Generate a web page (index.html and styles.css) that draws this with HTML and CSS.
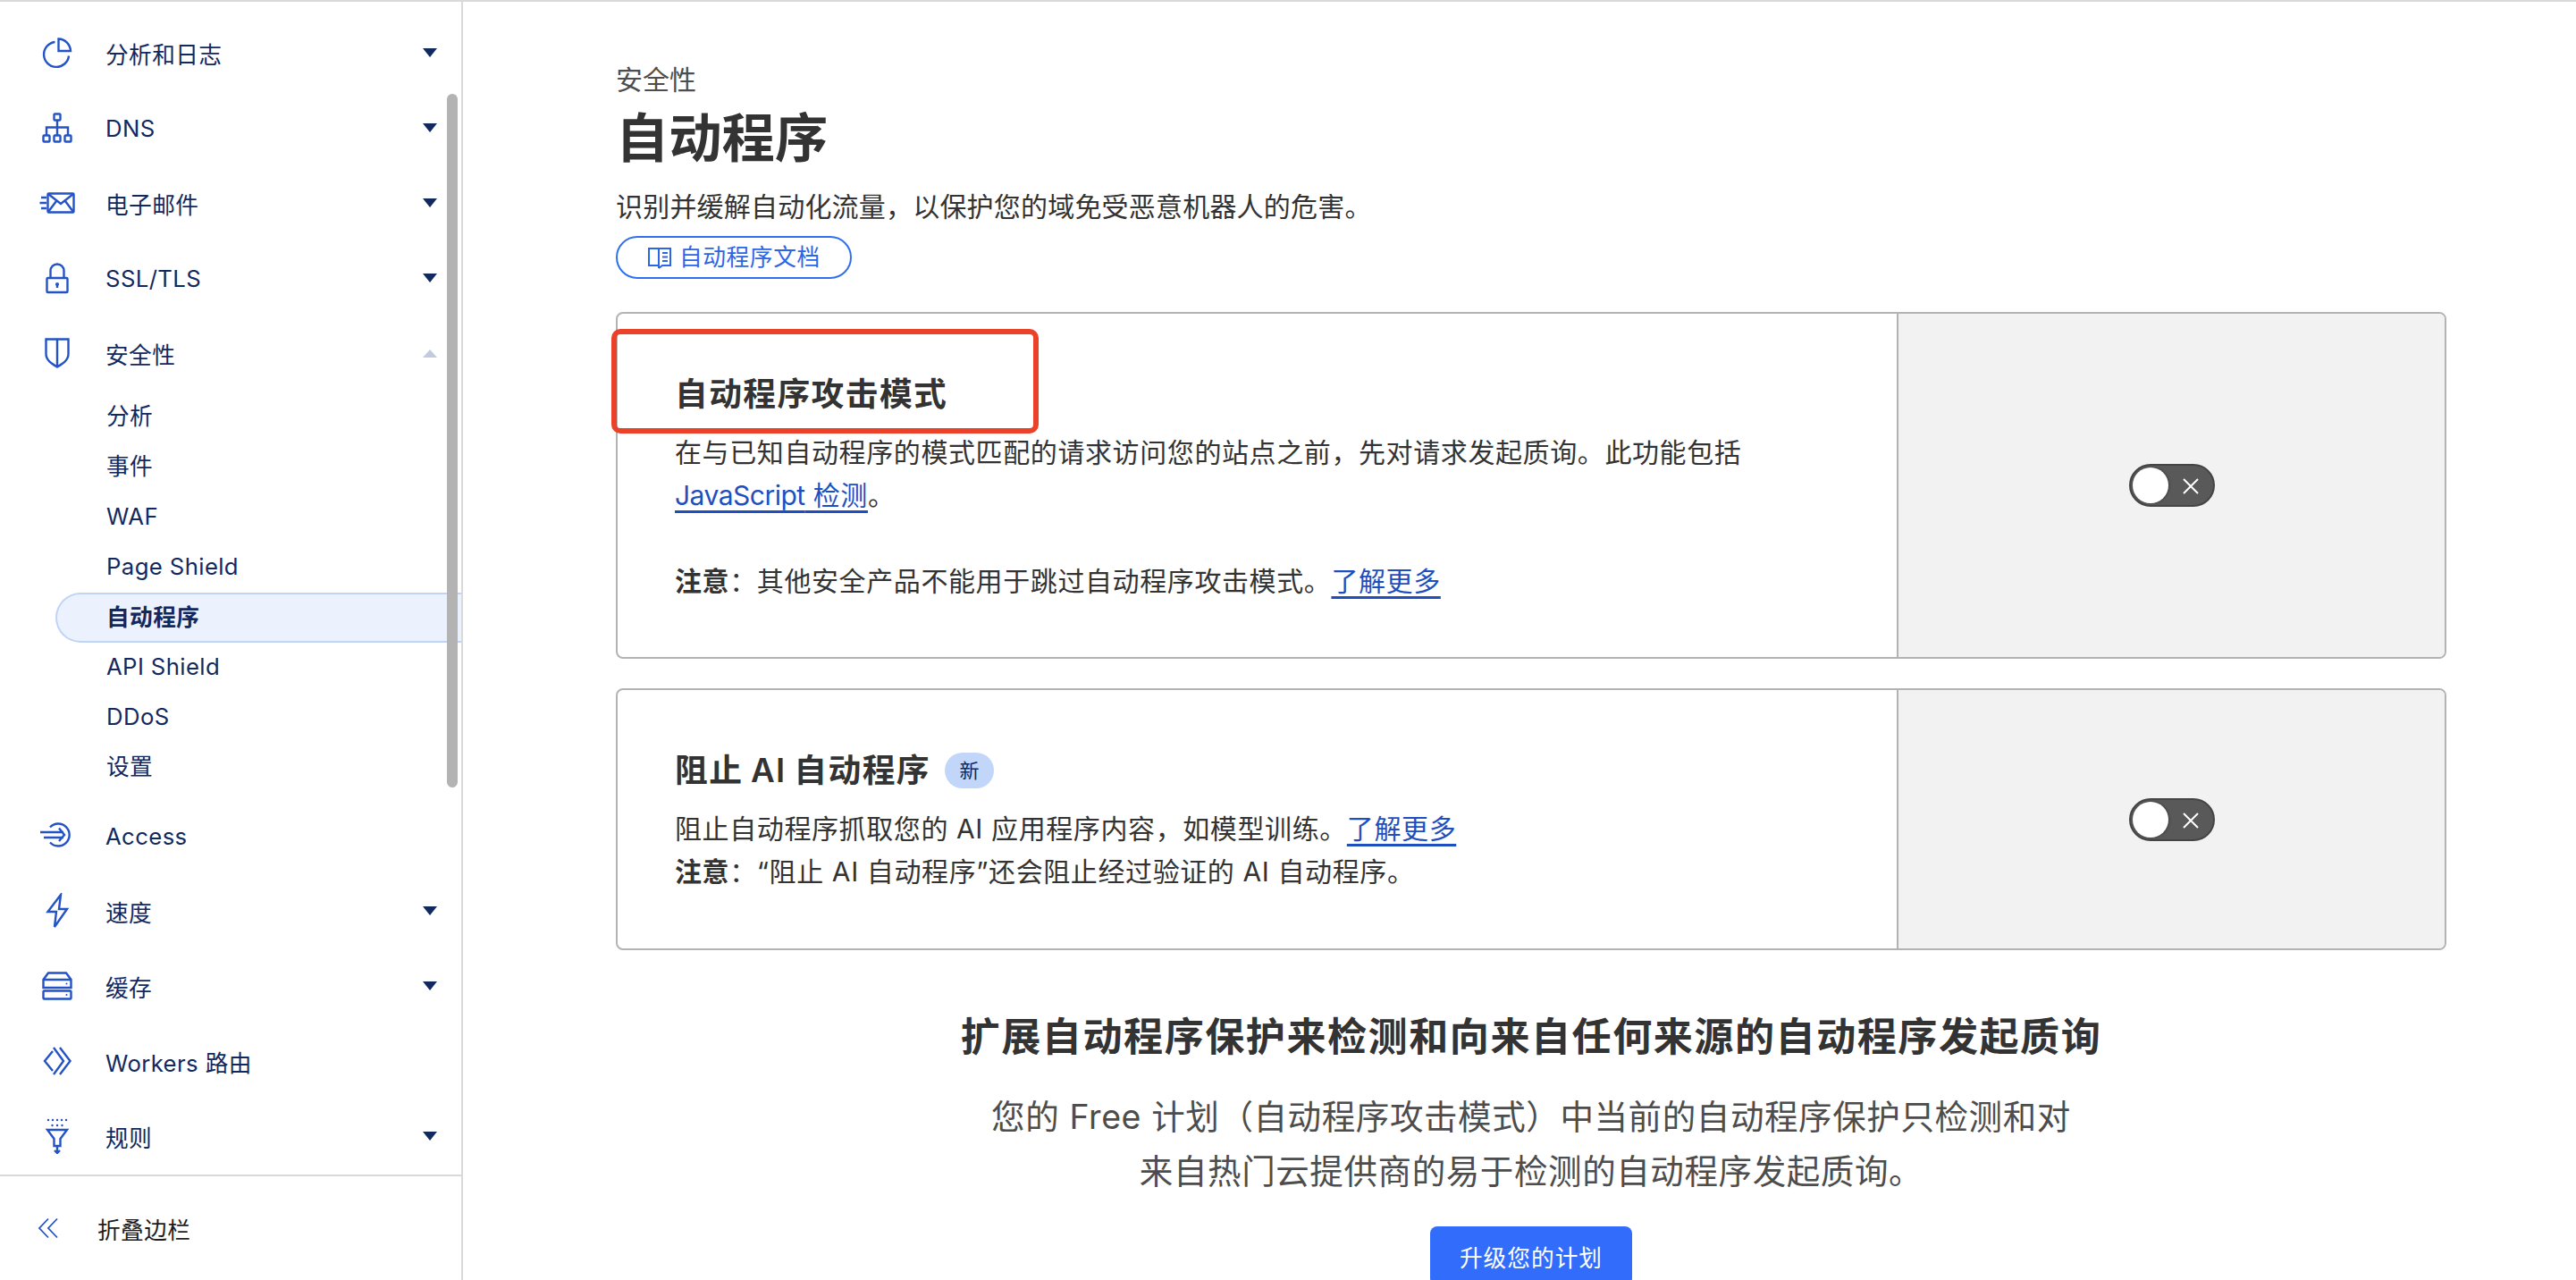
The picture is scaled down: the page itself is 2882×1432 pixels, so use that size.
FILE: index.html
```html
<!DOCTYPE html>
<html lang="zh-CN">
<head>
    <meta charset="UTF-8">
    <title>自动程序</title>
    <link rel="stylesheet" href="styles.css">
</head>
<body>
    <div class="app">
        <aside class="sidebar">
            <div class="scroll-thumb"></div>
            <nav class="nav">
                <a class="nav-row">
                    <svg class="nav-icon" viewBox="0 0 40 40"><path d="M17.500 8A14 14 0 1 0 33 23.500"/><path d="M21.500 4.500A14 14 0 0 1 35 18H21.500Z"/></svg>
                    <span>分析和日志</span><i class="caret"></i>
                </a>
                <a class="nav-row">
                    <svg class="nav-icon" viewBox="0 0 40 40"><rect x="16.500" y="4.500" width="7" height="7" rx="1"/><rect x="4.500" y="28.500" width="7" height="7" rx="1"/><rect x="16.500" y="28.500" width="7" height="7" rx="1"/><rect x="28.500" y="28.500" width="7" height="7" rx="1"/><path d="M20 11.500V28.500M8 28.500V19.500H32V28.500"/></svg>
                    <span>DNS</span><i class="caret"></i>
                </a>
                <a class="nav-row">
                    <svg class="nav-icon" viewBox="0 0 40 40"><rect x="9.500" y="9.500" width="29" height="21" rx="1"/><path d="M10 10L24 21L38 10M10 30L19 18M38 30L29 18M2 14H8M0.500 20H8M2 26H8"/></svg>
                    <span>电子邮件</span><i class="caret"></i>
                </a>
                <a class="nav-row">
                    <svg class="nav-icon" viewBox="0 0 40 40"><rect x="8.500" y="20" width="23" height="16" rx="1"/><path d="M12.500 20V12a7.500 7.500 0 0 1 15 0V20M20 27V31"/><circle class="dot" cx="20" cy="27" r="2"/></svg>
                    <span>SSL/TLS</span><i class="caret"></i>
                </a>
                <a class="nav-row">
                    <svg class="nav-icon" viewBox="0 0 40 40"><path d="M7.500 4.500H32.500V21C32.500 28 26 32 20 35.500C14 32 7.500 28 7.500 21ZM20 4.500V35.500"/></svg>
                    <span>安全性</span><i class="caret caret-up"></i>
                </a>
                <ul class="sub-nav">
                    <li>分析</li>
                    <li>事件</li>
                    <li>WAF</li>
                    <li>Page Shield</li>
                    <li class="active">自动程序</li>
                    <li>API Shield</li>
                    <li>DDoS</li>
                    <li>设置</li>
                </ul>
                <a class="nav-row">
                    <svg class="nav-icon" viewBox="0 0 40 40"><path d="M12 10.500A12.500 12.500 0 1 1 12 27.500M1 16H27M5 22H27M22 11.500L28 19L22 26"/></svg>
                    <span>Access</span>
                </a>
                <a class="nav-row">
                    <svg class="nav-icon" viewBox="0 0 40 40"><path d="M24 2L9.500 21H19L17 38L31 18H22Z"/></svg>
                    <span>速度</span><i class="caret"></i>
                </a>
                <a class="nav-row">
                    <svg class="nav-icon" viewBox="0 0 40 40"><path d="M4.500 22V13L10 5.500H30L35.500 13V22ZM4.500 13H35.500"/><rect x="4.500" y="25.500" width="31" height="9" rx="1"/><circle class="dot" cx="30.500" cy="17.500" r="1"/><circle class="dot" cx="30.500" cy="30" r="1"/></svg>
                    <span>缓存</span><i class="caret"></i>
                </a>
                <a class="nav-row">
                    <svg class="nav-icon" viewBox="0 0 40 40"><path d="M15 9L6 20L15 31M16 5L27 20L16 35M23 5L34.500 20L23 35"/></svg>
                    <span>Workers 路由</span>
                </a>
                <a class="nav-row">
                    <svg class="nav-icon" viewBox="0 0 40 40"><path d="M9 13H31L23.500 23V31H16.500V23ZM20 32V39M17 36L20 39L23 36"/><g class="dots"><circle cx="10" cy="2" r="1.200"/><circle cx="15" cy="2" r="1.200"/><circle cx="20" cy="2" r="1.200"/><circle cx="25" cy="2" r="1.200"/><circle cx="30" cy="2" r="1.200"/><circle cx="14.500" cy="8" r="1.200"/><circle cx="20" cy="8" r="1.200"/><circle cx="25.500" cy="8" r="1.200"/></g></svg>
                    <span>规则</span><i class="caret"></i>
                </a>
            </nav>
            <div class="collapse">
                <svg class="collapse-icon" viewBox="0 0 24 24"><path d="M12 1.500L2 12L12 22.500M22 1.500L12 12L22 22.500"/></svg>
                <span>折叠边栏</span>
            </div>
        </aside>

        <main class="main">
            <div class="crumb">安全性</div>
            <h1 class="page-title">自动程序</h1>
            <p class="page-desc">识别并缓解自动化流量，以保护您的域免受恶意机器人的危害。</p>
            <a class="doc-btn">
                <svg class="doc-icon" viewBox="0 0 26 25"><path d="M12 2H1V21H12M12 2V24M12 2H25V21H16L12 24M16 7H22M16 11.500H22M16 16H22"/></svg>
                自动程序文档
            </a>

            <section class="card">
                <div class="card-body">
                    <h2 class="card-title">自动程序攻击模式</h2>
                    <p>在与已知自动程序的模式匹配的请求访问您的站点之前，先对请求发起质询。此功能包括<br><a class="link"><span class="latin">JavaScript</span> 检测</a>。</p>
                    <p class="spaced"><b>注意</b>：其他安全产品不能用于跳过自动程序攻击模式。<a class="link">了解更多</a></p>
                </div>
                <div class="card-side">
                    <div class="toggle"><span class="knob"></span><svg class="toggle-x" viewBox="0 0 20 20"><path d="M2 2L18 18M18 2L2 18"/></svg></div>
                </div>
                <div class="highlight"></div>
            </section>

            <section class="card card-second">
                <div class="card-body">
                    <h2 class="card-title card-title-tight">阻止 AI 自动程序<span class="badge">新</span></h2>
                    <p>阻止自动程序抓取您的 AI 应用程序内容，如模型训练。<a class="link">了解更多</a></p>
                    <p><b>注意</b>：“阻止 AI 自动程序”还会阻止经过验证的 AI 自动程序。</p>
                </div>
                <div class="card-side">
                    <div class="toggle"><span class="knob"></span><svg class="toggle-x" viewBox="0 0 20 20"><path d="M2 2L18 18M18 2L2 18"/></svg></div>
                </div>
            </section>

            <section class="upsell">
                <h2>扩展自动程序保护来检测和向来自任何来源的自动程序发起质询</h2>
                <p>您的 Free 计划（自动程序攻击模式）中当前的自动程序保护只检测和对<br>来自热门云提供商的易于检测的自动程序发起质询。</p>
                <button class="upgrade-btn">升级您的计划</button>
            </section>
        </main>
    </div>
</body>
</html>
```
FILE: styles.css
```css
* {
    box-sizing: border-box;
}
html, body {
    margin: 0;
    height: 100%;
    overflow: hidden;
}
body {
    font-family: Inter, "Noto Sans CJK SC", sans-serif;
    background-color: #fff;
    color: #333;
}
.app {
    display: flex;
    height: 1432px;
    border-top: 2px solid #d9d9d9;
    overflow: hidden;
}

/* sidebar */
.sidebar {
    position: relative;
    width: 518px;
    flex-shrink: 0;
    border-right: 2px solid #d9d9d9;
    display: flex;
    flex-direction: column;
    color: #12295f;
    font-size: 25.7px;
    letter-spacing: 0.4px;
}
.scroll-thumb {
    position: absolute;
    left: 500px;
    top: 103px;
    width: 12px;
    height: 776px;
    border-radius: 6px;
    background-color: #b3b3b3;
    z-index: 2;
}
.nav {
    padding-top: 15px;
    height: 1314px;
    flex-shrink: 0;
    overflow: hidden;
    border-bottom: 2px solid #d9d9d9;
}
.nav-row {
    display: flex;
    align-items: center;
    height: 84px;
    padding: 0 27px 0 44px;
    gap: 34px;
}
.nav-icon {
    width: 40px;
    height: 40px;
    flex-shrink: 0;
    fill: none;
    stroke: #2353c4;
    stroke-width: 2.4;
}
.nav-icon .dot, .nav-icon .dots {
    fill: #2353c4;
    stroke: none;
}
.caret {
    margin-left: auto;
    width: 0;
    height: 0;
    border-left: 8.5px solid transparent;
    border-right: 8.5px solid transparent;
    border-top: 10px solid #12295f;
}
.caret-up {
    border-top: none;
    border-bottom: 9px solid #c2cbdc;
}
.sub-nav {
    list-style: none;
    margin: 2px 0 6px;
    padding: 0;
}
.sub-nav li {
    height: 56px;
    line-height: 54px;
    padding-left: 119px;
}
.sub-nav .active {
    margin-left: 62px;
    padding-left: 55px;
    font-weight: 700;
    line-height: 52px;
    background-color: #ebf2fd;
    border: 2px solid #bfd4f7;
    border-right: none;
    border-radius: 28px 0 0 28px;
}
.collapse {
    display: flex;
    align-items: center;
    gap: 43px;
    padding: 0 0 0 42px;
    height: 122px;
    color: #1d1d1d;
}
.collapse-icon {
    width: 24px;
    height: 24px;
    fill: none;
    stroke: #2353c4;
    stroke-width: 1.8;
}

/* main column */
.main {
    flex: 1;
    padding: 65px 145px 0 171px;
    font-size: 30px;
    letter-spacing: 0.6px;
    line-height: 48px;
}
.crumb {
    line-height: 44px;
    letter-spacing: 0;
    color: #4d4d4d;
}
.page-title {
    margin: 8px 0 18px;
    font-size: 59.300px;
    font-weight: 700;
    line-height: 72px;
    letter-spacing: 0;
}
.page-desc {
    margin: 0 0 11px;
    line-height: 44px;
    letter-spacing: 0.2px;
}
.doc-btn {
    display: flex;
    align-items: center;
    gap: 9px;
    height: 48px;
    width: 264px;
    padding-left: 34px;
    border: 2px solid #3070f0;
    border-radius: 24px;
    font-size: 25.7px;
    letter-spacing: 0.6px;
    color: #2c66e6;
}
.doc-icon {
    width: 26px;
    height: 25px;
    fill: none;
    stroke: #2c66e6;
    stroke-width: 2;
}
.card {
    position: relative;
    display: flex;
    margin-top: 37px;
    height: 388px;
    border: 2px solid #b3b3b3;
    border-radius: 8px;
}
.card-second {
    margin-top: 33px;
    height: 293px;
}
.card-body {
    flex: 1;
    padding: 65px 65px 0 64px;
}
.card-body p {
    margin: 0;
}
.card-body .spaced {
    margin-top: 48px;
}
.card-title {
    display: flex;
    align-items: center;
    margin: 0 0 16px;
    font-size: 36.750px;
    font-weight: 600;
    line-height: 50px;
    letter-spacing: 1.400px;
}
.card-title-tight {
    word-spacing: -2px;
}
.badge {
    width: 55px;
    height: 40px;
    margin-left: 16px;
    border-radius: 20px;
    background-color: #c2d6f9;
    color: #12295f;
    font-size: 22px;
    font-weight: 400;
    line-height: 40px;
    letter-spacing: 0;
    text-align: center;
}
.link {
    color: #1f4fbf;
    text-decoration: underline;
    text-decoration-thickness: 2.500px;
    text-underline-offset: 6px;
    text-decoration-skip-ink: none;
}
.latin {
    letter-spacing: -0.500px;
}
.card-side {
    width: 613px;
    flex-shrink: 0;
    display: flex;
    align-items: center;
    justify-content: center;
    background-color: #f2f2f2;
    border-left: 2px solid #b3b3b3;
    border-radius: 0 6px 6px 0;
}
.toggle {
    position: relative;
    width: 96px;
    height: 48px;
    border-radius: 24px;
    background-color: #595959;
    border: 2px solid #454545;
}
.knob {
    position: absolute;
    left: 2px;
    top: 2px;
    width: 40px;
    height: 40px;
    border-radius: 50%;
    background-color: #fff;
    box-shadow: 1px 0 3px rgba(0,0,0,0.3);
}
.toggle-x {
    position: absolute;
    left: 57px;
    top: 13px;
    width: 20px;
    height: 20px;
    fill: none;
    stroke: #fff;
    stroke-width: 2;
}
.highlight {
    position: absolute;
    left: -7px;
    top: 17px;
    width: 478px;
    height: 117px;
    border: 6px solid #ea4128;
    border-radius: 10px;
}
.upsell {
    text-align: center;
    margin-top: 67px;
}
.upsell h2 {
    margin: 0 0 30px;
    font-size: 44.100px;
    font-weight: 600;
    line-height: 60px;
    letter-spacing: 1.500px;
}
.upsell p {
    margin: 0 0 31px;
    font-size: 37.500px;
    line-height: 60.500px;
    letter-spacing: 0.600px;
    color: #4d4d4d;
}
.upgrade-btn {
    width: 226px;
    height: 66px;
    border: none;
    border-radius: 8px;
    background-color: #316dfa;
    color: #fff;
    font-family: inherit;
    font-size: 25.7px;
    letter-spacing: 1px;
}
```
